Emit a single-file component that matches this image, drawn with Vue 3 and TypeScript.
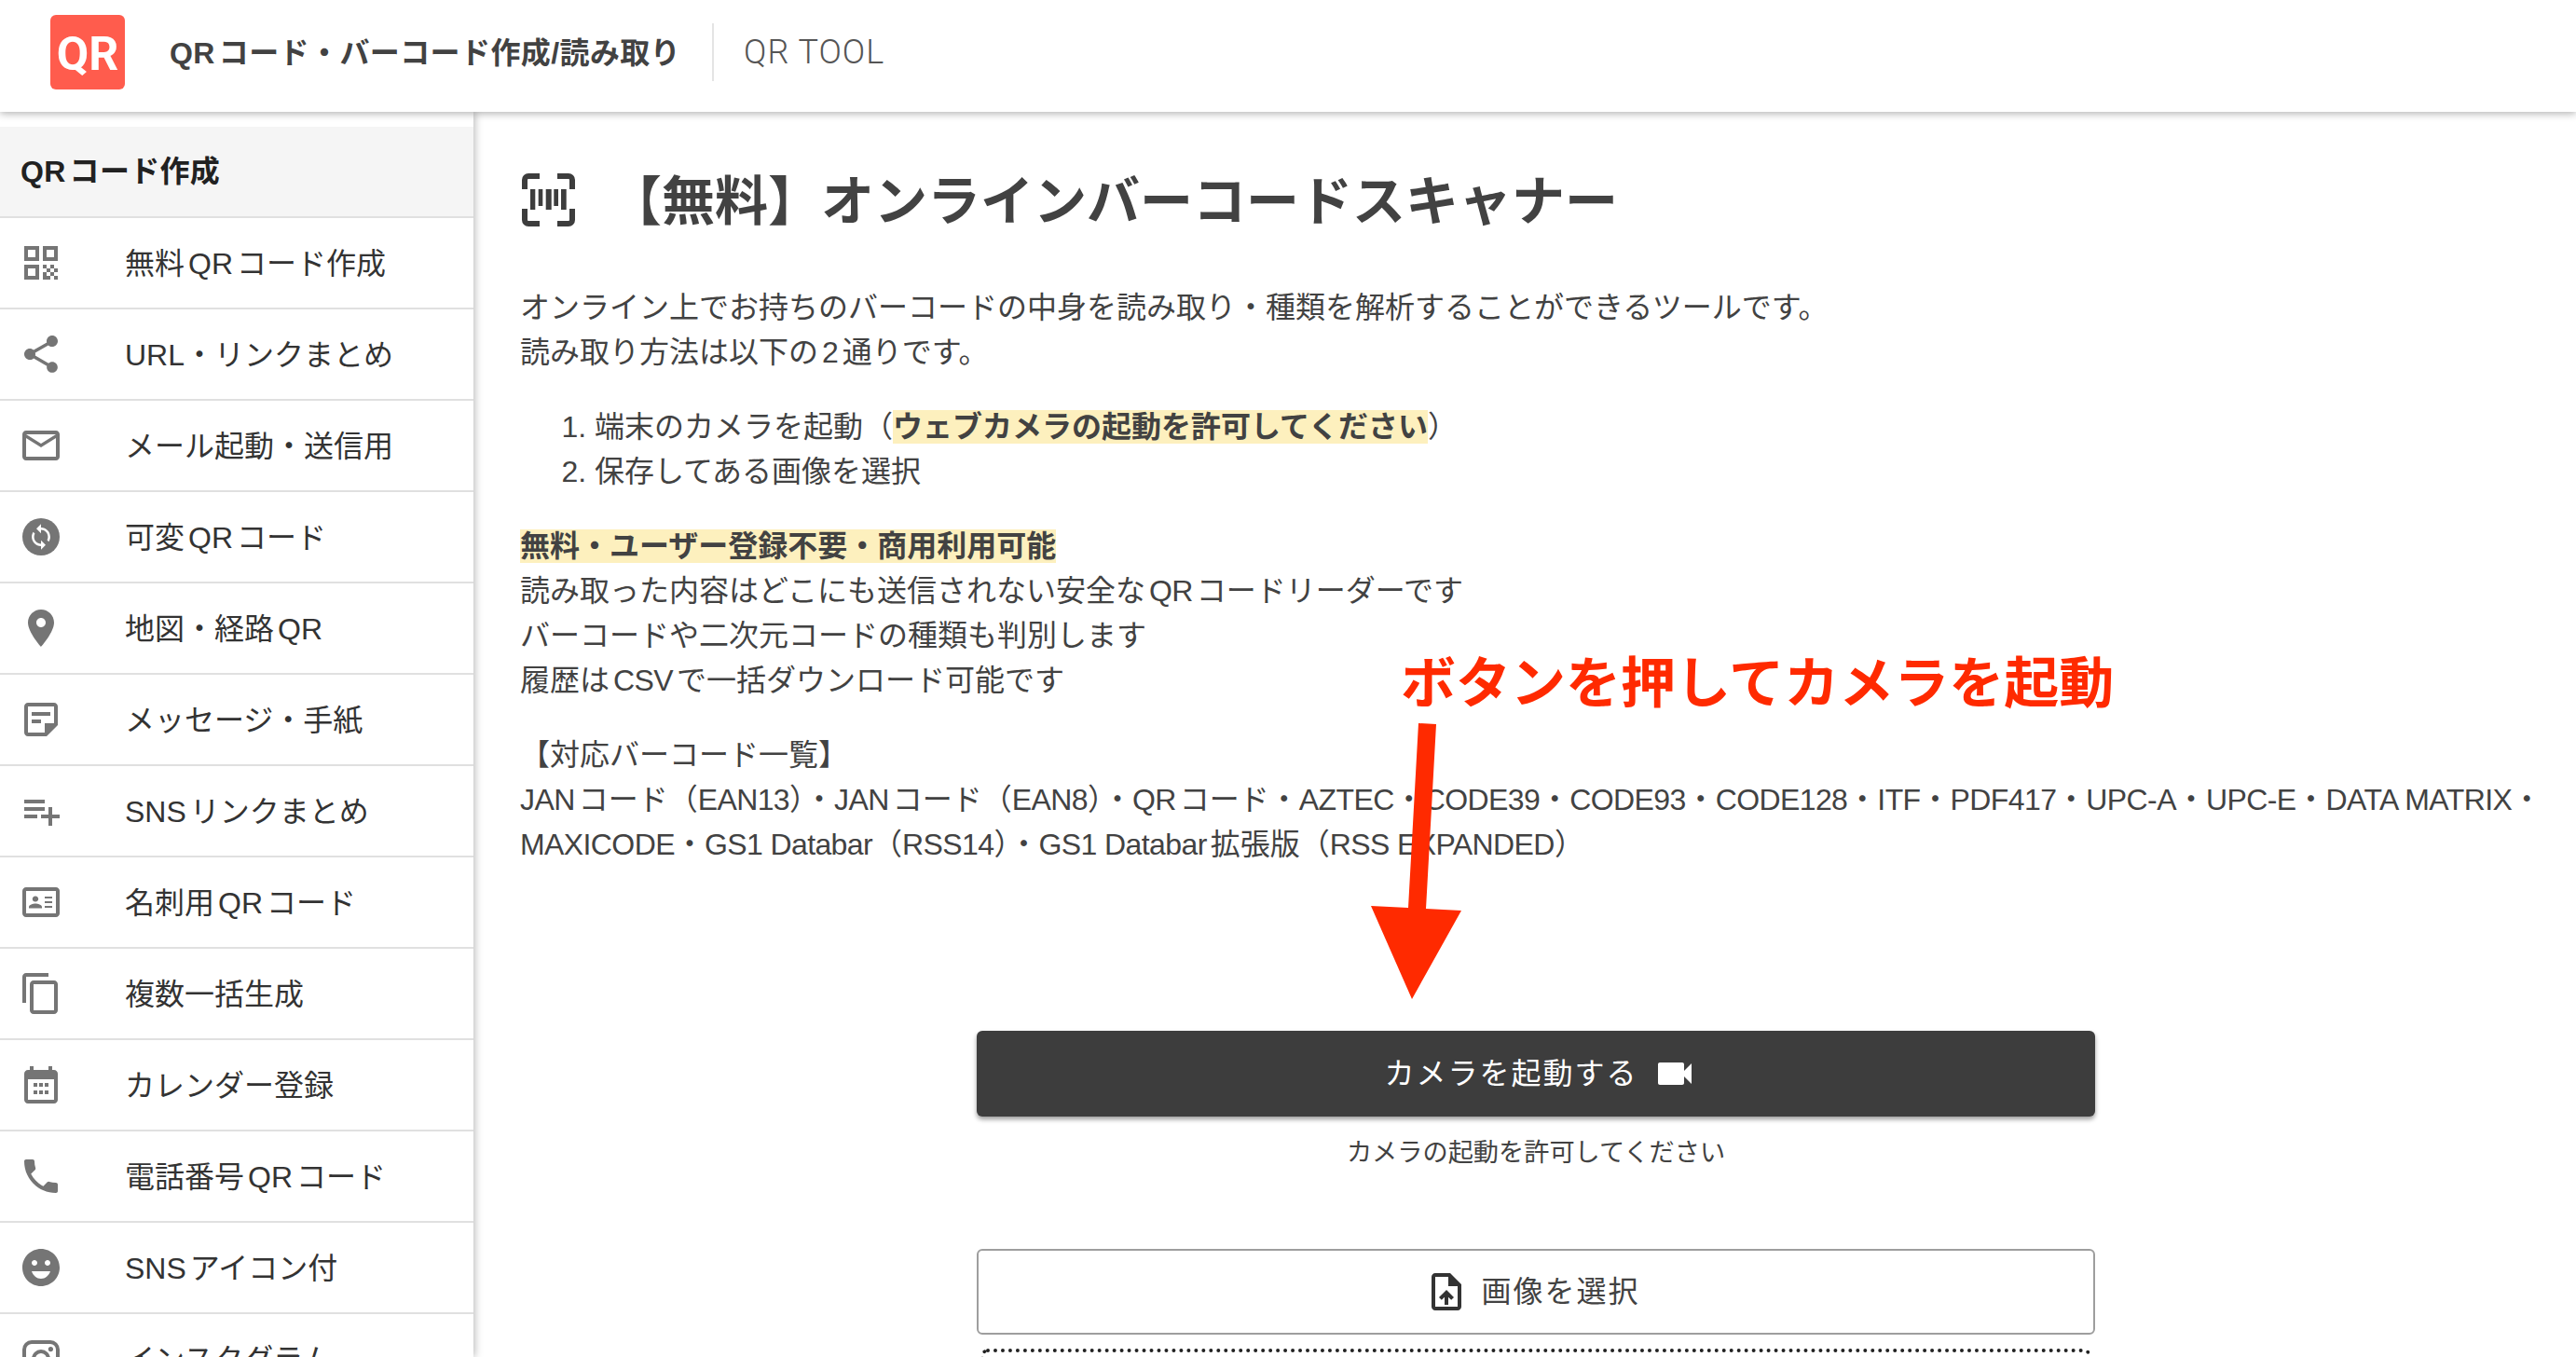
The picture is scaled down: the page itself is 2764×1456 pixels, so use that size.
<script setup lang="ts">
interface NavItem { label: string; icon: string }
const nav: NavItem[] = [
  { label: '無料QRコード作成', icon: 'qr' },
  { label: 'URL・リンクまとめ', icon: 'share' },
  { label: 'メール起動・送信用', icon: 'mail' },
  { label: '可変QRコード', icon: 'change' },
  { label: '地図・経路QR', icon: 'pin' },
  { label: 'メッセージ・手紙', icon: 'note' },
  { label: 'SNSリンクまとめ', icon: 'playlist' },
  { label: '名刺用QRコード', icon: 'card' },
  { label: '複数一括生成', icon: 'copy' },
  { label: 'カレンダー登録', icon: 'calendar' },
  { label: '電話番号QRコード', icon: 'phone' },
  { label: 'SNSアイコン付', icon: 'mood' },
  { label: 'インスタグラム', icon: 'insta' }
]
const codeLine = 'JANコード（EAN13）・JANコード（EAN8）・QRコード・AZTEC・CODE39・CODE93・CODE128・ITF・PDF417・UPC-A・UPC-E・DATA MATRIX・MAXICODE・GS1 Databar（RSS14）・GS1 Databar拡張版（RSS EXPANDED）'
const codeRuns = codeLine.match(/[\x20-\x7e]+|[^\x20-\x7e]+/g) ?? []
const isLatin = (run: string): boolean => /^[\x20-\x7e]/.test(run)
const paths: Record<string, string> = {
  qr: 'M3 11h8V3H3v8zm2-6h4v4H5V5zM3 21h8v-8H3v8zm2-6h4v4H5v-4zM13 3v8h8V3h-8zm6 6h-4V5h4v4zM13 13h2v2h-2zM15 15h2v2h-2zM13 17h2v2h-2zM15 19h2v2h-2zM17 17h2v2h-2zM17 13h2v2h-2zM19 15h2v2h-2zM19 19h2v2h-2zM13 19h2v2h-2z',
  share: 'M18 16.08c-.76 0-1.44.3-1.96.77L8.91 12.7c.05-.23.09-.46.09-.7s-.04-.47-.09-.7l7.05-4.11c.54.5 1.25.81 2.04.81 1.66 0 3-1.34 3-3s-1.34-3-3-3-3 1.34-3 3c0 .24.04.47.09.7L8.04 9.81C7.5 9.31 6.79 9 6 9c-1.66 0-3 1.34-3 3s1.34 3 3 3c.79 0 1.5-.31 2.04-.81l7.12 4.16c-.05.21-.08.43-.08.65 0 1.61 1.31 2.92 2.92 2.92 1.61 0 2.92-1.31 2.92-2.92s-1.31-2.92-2.92-2.92z',
  mail: 'M20 4H4c-1.1 0-1.99.9-1.99 2L2 18c0 1.1.9 2 2 2h16c1.1 0 2-.9 2-2V6c0-1.1-.9-2-2-2zm0 14H4V8l8 5 8-5v10zm-8-7L4 6h16l-8 5z',
  pin: 'M12 2C8.13 2 5 5.13 5 9c0 5.25 7 13 7 13s7-7.75 7-13c0-3.87-3.13-7-7-7zm0 9.5c-1.38 0-2.5-1.12-2.5-2.5s1.12-2.5 2.5-2.5 2.5 1.12 2.5 2.5-1.12 2.5-2.5 2.5z',
  note: 'M19 5v9h-5v5H5V5h14m0-2H5c-1.1 0-2 .9-2 2v14c0 1.1.9 2 2 2h10l6-6V5c0-1.1-.9-2-2-2zM12 14H7v-2h5v2zM17 10H7V8h10v2z',
  playlist: 'M14 10H3v2h11v-2zm0-4H3v2h11V6zm4 8v-4h-2v4h-4v2h4v4h2v-4h4v-2h-4zM3 16h7v-2H3v2z',
  card: 'M20 4H4c-1.1 0-2 .9-2 2v12c0 1.1.9 2 2 2h16c1.1 0 2-.9 2-2V6c0-1.1-.9-2-2-2zm0 14H4V6h16v12zM14 9h4v1h-4zM14 11.5h4v1h-4zM14 14h4v1h-4zM9 11.8c1 0 1.6-.7 1.6-1.5S10 8.7 9 8.7s-1.6.7-1.6 1.6.6 1.5 1.6 1.5zM5.5 15.3h7v-.7c0-1.2-2.3-1.8-3.5-1.8s-3.5.6-3.5 1.8z',
  copy: 'M16 1H4c-1.1 0-2 .9-2 2v14h2V3h12V1zm3 4H8c-1.1 0-2 .9-2 2v14c0 1.1.9 2 2 2h11c1.1 0 2-.9 2-2V7c0-1.1-.9-2-2-2zm0 16H8V7h11v14z',
  calendar: 'M19 4h-1V2h-2v2H8V2H6v2H5c-1.1 0-2 .9-2 2v14c0 1.1.9 2 2 2h14c1.1 0 2-.9 2-2V6c0-1.1-.9-2-2-2zm0 16H5V9h14v11zM8 11h2v2H8zM11 11h2v2h-2zM14 11h2v2h-2zM8 15h2v2H8zM11 15h2v2h-2zM14 15h2v2h-2z',
  phone: 'M6.62 10.79c1.44 2.83 3.76 5.14 6.59 6.59l2.2-2.2c.27-.27.67-.36 1.02-.24 1.12.37 2.33.57 3.57.57.55 0 1 .45 1 1V20c0 .55-.45 1-1 1-9.39 0-17-7.61-17-17 0-.55.45-1 1-1h3.5c.55 0 1 .45 1 1 0 1.25.2 2.45.57 3.57.11.35.03.74-.25 1.02l-2.2 2.2z',
  mood: 'M11.99 2C6.47 2 2 6.48 2 12s4.47 10 9.99 10C17.52 22 22 17.52 22 12S17.52 2 11.99 2zM8.5 8c.83 0 1.5.67 1.5 1.5S9.33 11 8.5 11 7 10.33 7 9.5 7.67 8 8.5 8zM12 18c-2.28 0-4.22-1.66-5-4h10c-.78 2.34-2.72 4-5 4zm3.5-7c-.83 0-1.5-.67-1.5-1.5S14.67 8 15.5 8s1.5.67 1.5 1.5-.67 1.5-1.5 1.5z',
  insta: 'M7 2h10a5 5 0 0 1 5 5v10a5 5 0 0 1-5 5H7a5 5 0 0 1-5-5V7a5 5 0 0 1 5-5zm0 2a3 3 0 0 0-3 3v10a3 3 0 0 0 3 3h10a3 3 0 0 0 3-3V7a3 3 0 0 0-3-3H7zm5 3a5 5 0 1 1 0 10 5 5 0 0 1 0-10zm0 2a3 3 0 1 0 0 6 3 3 0 0 0 0-6zm5.2-3.5a1.3 1.3 0 1 1 0 2.6 1.3 1.3 0 0 1 0-2.6z'
}
</script>

<template>
  <div class="page">
    <header class="topbar">
      <div class="logo">QR</div>
      <div class="site">QRコード・バーコード作成/読み取り</div>
      <div class="sep"></div>
      <div class="tool">QR TOOL</div>
    </header>
    <div class="body">
      <aside class="side">
        <div class="side-head">QRコード作成</div>
        <div v-for="item in nav" :key="item.label" class="row">
          <svg class="ico" viewBox="0 0 24 24" width="48" height="48">
            <template v-if="item.icon === 'change'">
              <circle cx="12" cy="12" r="10" fill="#757575" />
              <path fill="#fff" transform="translate(12 12) scale(.62) translate(-12 -12)" d="M12 4V1L8 5l4 4V6c3.31 0 6 2.69 6 6 0 1.01-.25 1.97-.7 2.8l1.46 1.46C19.54 15.03 20 13.57 20 12c0-4.42-3.58-8-8-8zm0 14c-3.31 0-6-2.69-6-6 0-1.01.25-1.97.7-2.8L5.24 7.74C4.46 8.97 4 10.43 4 12c0 4.42 3.58 8 8 8v3l4-4-4-4v3z" />
            </template>
            <path v-else fill="#757575" :d="paths[item.icon]" />
          </svg>
          <span class="row-text">{{ item.label }}</span>
        </div>
      </aside>
      <main class="main">
        <h1 class="title">
          <svg class="scan" viewBox="0 0 60 60" width="60" height="60">
            <path fill="none" stroke="#3d3d3d" stroke-width="6" d="M21 5H9a4 4 0 0 0-4 4v10M40 5h12a4 4 0 0 1 4 4v10M21 56H9a4 4 0 0 1-4-4V40M40 56h12a4 4 0 0 0 4-4V40" />
            <rect fill="#3d3d3d" x="11" y="19" width="5.3" height="22" />
            <rect fill="#3d3d3d" x="19.7" y="19" width="4.6" height="18" />
            <rect fill="#3d3d3d" x="27.7" y="19" width="6" height="22" />
            <rect fill="#3d3d3d" x="36.3" y="19" width="4.7" height="18" />
            <rect fill="#3d3d3d" x="44" y="19" width="5.7" height="22" />
          </svg>
          <span class="title-text">【無料】オンラインバーコードスキャナー</span>
        </h1>
        <p class="para">オンライン上でお持ちのバーコードの中身を読み取り・種類を解析することができるツールです。<br />読み取り方法は以下の2通りです。</p>
        <ol class="steps">
          <li>端末のカメラを起動（<b class="mark">ウェブカメラの起動を許可してください</b>）</li>
          <li>保存してある画像を選択</li>
        </ol>
        <p class="para"><b class="mark">無料・ユーザー登録不要・商用利用可能</b><br />読み取った内容はどこにも送信されない安全な<span class="lat">QR</span>コードリーダーです<br />バーコードや二次元コードの種類も判別します<br />履歴は<span class="lat">CSV</span>で一括ダウンロード可能です</p>
        <p class="para">【対応バーコード一覧】<br /><template v-for="(run, i) in codeRuns" :key="i"><span v-if="isLatin(run)" class="lat">{{ run }}</span><template v-else>{{ run }}</template></template></p>
        <div class="actions">
          <button class="btn dark">
            <span class="btn-text">カメラを起動する</span>
            <svg viewBox="0 0 24 24" width="48" height="48"><path fill="#fff" d="M17 10.5V7c0-.55-.45-1-1-1H4c-.55 0-1 .45-1 1v10c0 .55.45 1 1 1h12c.55 0 1-.45 1-1v-3.5l4 4v-11l-4 4z" /></svg>
          </button>
          <div class="hint">カメラの起動を許可してください</div>
          <button class="btn outline">
            <svg viewBox="0 0 24 24" width="48" height="48"><path fill="#333" d="M14 2H6c-1.1 0-1.99.9-1.99 2L4 20c0 1.1.89 2 1.99 2H18c1.1 0 2-.9 2-2V8l-6-6zm4 18H6V4h7v5h5v11zM8 15.01l1.41 1.41L11 14.84V19h2v-4.16l1.59 1.59L16 15.01 12.01 11 8 15.01z" /></svg>
            <span class="btn-text">画像を選択</span>
          </button>
          <div class="drop"></div>
        </div>
      </main>
    </div>
    <div class="callout">ボタンを押してカメラを起動</div>
    <svg class="arrow" viewBox="0 0 2764 1456" width="2764" height="1456">
      <polygon fill="#ff2a00" points="1522,776 1541,777 1530,975 1568,977 1515,1072 1471,972 1511,974" />
    </svg>
  </div>
</template>

<style>
html, body { margin: 0; background: #fff; }
</style>

<style scoped>
.page {
  position: relative;
  width: 2764px;
  height: 1456px;
  overflow: hidden;
  background: #fff;
  font-family: "Liberation Sans", "Noto Sans CJK JP", sans-serif;
  text-autospace: normal;
  color: #424242;
}
.topbar {
  position: relative;
  z-index: 3;
  box-sizing: border-box;
  height: 120px;
  display: flex;
  align-items: center;
  background: #fff;
  box-shadow: 0 2px 8px rgba(0, 0, 0, .3);
  padding: 0 0 8px 54px;
}
.logo {
  width: 80px;
  height: 80px;
  border-radius: 6px;
  background: #ff5c4d;
  color: #fff;
  font-family: Roboto, sans-serif;
  font-weight: 700;
  font-size: 50px;
  line-height: 84px;
  text-align: center;
}
.site {
  margin-left: 48px;
  margin-top: -4px;
  font-size: 32px;
  font-weight: 700;
  letter-spacing: .4px;
  color: #424242;
  white-space: nowrap;
}
.sep {
  width: 2px;
  height: 62px;
  margin-left: 34px;
  background: #e4e4e4;
}
.tool {
  margin-left: 32px;
  font-family: Roboto, sans-serif;
  font-size: 36px;
  font-weight: 300;
  letter-spacing: 1px;
  color: #555;
}
.body {
  display: flex;
  height: 1336px;
}
.side {
  position: relative;
  z-index: 2;
  flex: 0 0 508px;
  padding-top: 16px;
  background: #fff;
  box-shadow: 2px 0 8px rgba(0, 0, 0, .25);
}
.side-head {
  box-sizing: border-box;
  height: 98px;
  padding-left: 22px;
  background: #f5f5f5;
  border-bottom: 2px solid #e0e0e0;
  font-size: 32px;
  font-weight: 700;
  line-height: 96px;
  letter-spacing: .3px;
  color: #212121;
}
.row {
  box-sizing: border-box;
  height: 98px;
  display: flex;
  align-items: center;
  padding-left: 20px;
  border-bottom: 2px solid #e0e0e0;
  font-size: 32px;
  color: #333;
  white-space: nowrap;
}
.row-text { margin: -5px 0 0 -1px; }
.ico { flex: none; margin-right: 67px; }
.main {
  flex: 1;
  min-width: 0;
  padding: 64px 26px 0 50px;
}
.title {
  display: flex;
  align-items: center;
  margin: 0 0 62px;
  height: 60px;
  font-size: 57px;
  font-weight: 700;
  color: #424242;
  white-space: nowrap;
}
.title-text { margin-top: -6px; }
.scan { flex: none; margin-right: 35px; }
.para {
  margin: 0 0 32px;
  font-size: 32px;
  line-height: 48px;
  color: #424242;
}
.lat { letter-spacing: -.6px; }
.steps {
  margin: 0 0 32px;
  padding: 0 0 0 80px;
  font-size: 32px;
  line-height: 48px;
}
.mark {
  font-weight: 700;
  background: #fdf0be;
}
.actions {
  display: flex;
  flex-direction: column;
  align-items: center;
  margin-top: 176px;
}
.btn {
  box-sizing: border-box;
  width: 1200px;
  height: 92px;
  display: flex;
  align-items: center;
  justify-content: center;
  gap: 15px;
  border-radius: 6px;
  font-family: inherit;
  font-size: 32px;
  letter-spacing: 2px;
}
.btn-text { margin-top: -6px; }
.dark {
  border: 0;
  padding: 0 0 0 10px;
  background: #3d3d3d;
  color: #fff;
  box-shadow: 0 3px 5px rgba(0, 0, 0, .4);
}
.outline {
  border: 2px solid #9e9e9e;
  padding: 0 8px 0 0;
  gap: 13px;
  background: #fff;
  color: #424242;
  margin-top: 82px;
}
.hint {
  margin-top: 18px;
  font-size: 27.2px;
  line-height: 42px;
  height: 42px;
  color: #424242;
}
.drop {
  width: 1192px;
  height: 60px;
  margin-top: 15px;
  border: 4px dotted #222;
  border-radius: 8px;
  box-sizing: border-box;
}
.callout {
  position: absolute;
  z-index: 4;
  left: 1503px;
  top: 692px;
  font-size: 59px;
  font-weight: 700;
  line-height: 84px;
  color: #ff2a00;
  white-space: nowrap;
}
.arrow {
  position: absolute;
  z-index: 4;
  left: 0;
  top: 0;
  pointer-events: none;
}
</style>
